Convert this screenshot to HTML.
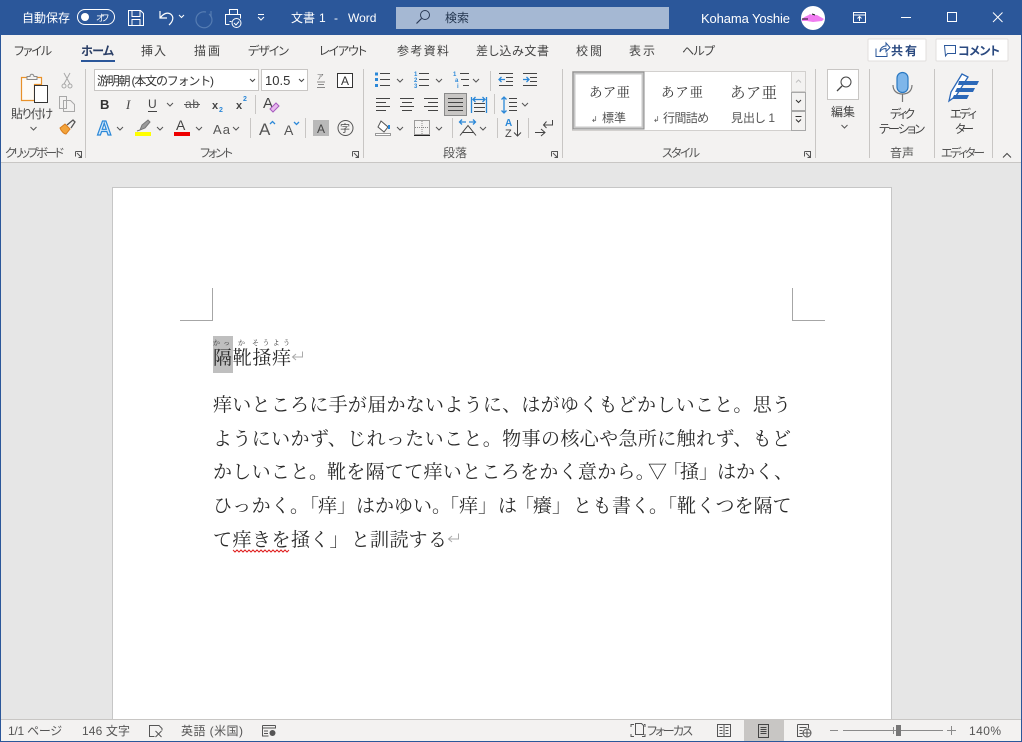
<!DOCTYPE html>
<html lang="ja"><head><meta charset="utf-8"><title>文書 1 - Word</title>
<style>
html,body{margin:0;padding:0;width:1022px;height:742px;overflow:hidden;background:#e6e6e6}
svg{display:block;position:absolute;left:0;top:0}
text{font-family:"Liberation Sans","Noto Sans CJK JP",sans-serif;font-size:12px;fill:#444;font-feature-settings:"palt"}
.w{fill:#fff}
.s{font-size:12px;fill:#555}
.d{font-family:"Liberation Serif","Noto Serif CJK JP","Noto Serif CJK SC",serif;font-size:19px;fill:#2a2a2a;font-feature-settings:normal}
.m{font-family:"Liberation Serif","Noto Serif CJK JP","Noto Serif CJK SC",serif;font-feature-settings:normal}
.l{stroke:#444;stroke-width:1;fill:none}
.g{stroke:#8a8a8a;stroke-width:1;fill:none}
.b{stroke:#2b88d8;stroke-width:1.3;fill:none}
.c{stroke:#555;stroke-width:1;fill:none}
.sep{stroke:#c8c6c4;stroke-width:1}
</style></head><body>
<svg width="1022" height="742" viewBox="0 0 1022 742" xmlns="http://www.w3.org/2000/svg">
<rect width="1022" height="742" fill="#e6e6e6"/>
<!-- title bar -->
<rect width="1022" height="35" fill="#2b579a"/>
<text class="w" x="22" y="22" textLength="48">自動保存</text>
<rect x="77.500" y="9.500" width="37" height="15" rx="7.500" fill="none" stroke="#fff"/>
<circle cx="85" cy="17" r="4" fill="#fff"/>
<text class="w" x="96" y="21" style="font-size:9px" textLength="13">オフ</text>
<path d="M128.500 10.500h12l3 3v12h-15zM132 10.500v6h8v-6M132 25.500v-6h8v6" fill="none" stroke="#fff"/>
<path d="M160 11v7h7M160.500 17.500c3-4 7-5.500 10-3.500 3.500 2.500 3 7-1.500 11" fill="none" stroke="#fff" stroke-width="1.200"/>
<path d="M179 15l2.500 2.500 2.500-2.500" fill="none" stroke="#fff"/>
<path d="M211 11v6M206 12a8 8 0 1 0 6 8 8 8 0 0 0-3-6" fill="none" stroke="#557cb2" stroke-width="1.200"/>
<path d="M229.500 14.500v-5h8v5M225.500 24.500v-10h15v4M225.500 24.500h4M229.500 21.500h2" fill="none" stroke="#fff"/>
<circle cx="236.500" cy="23" r="4.500" fill="#2b579a" stroke="#fff"/><path d="M234 23l2 2 3-3.500" fill="none" stroke="#fff"/>
<path d="M258 14.500h6M258 17l3 3 3-3" fill="none" stroke="#fff"/>
<text class="w" x="291" y="22" textLength="24">文書</text>
<text class="w" x="319" y="22">1</text>
<text class="w" x="334" y="22">-</text>
<text class="w" x="348" y="22">Word</text>
<rect x="396" y="7" width="273" height="22" fill="#a5b8d3"/>
<circle cx="425" cy="15" r="4.500" fill="none" stroke="#2b3a55"/><path d="M421.500 18.500l-5 5" stroke="#2b3a55" stroke-width="1.200"/>
<text x="445" y="22" textLength="24" style="fill:#24364f">検索</text>
<text class="w" x="701" y="23" textLength="89" style="font-size:13px">Kohama Yoshie</text>
<circle cx="813" cy="18" r="12" fill="#fff"/>
<path d="M802 19c3-3 6-3 8-5l2 1 5 0 7 4-2 2-9 1-6-1-5 0z" fill="#f07cf0"/><path d="M802 19h6M812 14l3 1" stroke="#111" stroke-width="1" fill="none"/>
<path d="M853.500 12.500h12v10h-12zM853.500 15h12M859.500 21v-4M857.500 18.500l2-2 2 2" fill="none" stroke="#fff"/>
<path d="M901 17.500h10" stroke="#fff"/>
<rect x="947.500" y="12.500" width="9" height="9" fill="none" stroke="#fff"/>
<path d="M993 12.500l9.500 9.500M1002.500 12.500l-9.500 9.500" stroke="#fff" stroke-width="1"/>
<!-- ribbon -->
<rect x="1" y="35" width="1020" height="127" fill="#f3f2f1"/>
<rect x="1" y="162" width="1020" height="1" fill="#c8c6c4"/>
<text x="14" y="55" textLength="38">ファイル</text>
<text x="81" y="55" textLength="33" style="font-weight:bold;fill:#2b3f66">ホーム</text>
<rect x="81" y="60" width="34" height="2" fill="#2b579a"/>
<text x="141" y="55" textLength="25">挿入</text>
<text x="194" y="55" textLength="26">描画</text>
<text x="248" y="55" textLength="41">デザイン</text>
<text x="319" y="55" textLength="48">レイアウト</text>
<text x="397" y="55" textLength="52">参考資料</text>
<text x="476" y="55" textLength="73">差し込み文書</text>
<text x="576" y="55" textLength="26">校閲</text>
<text x="629" y="55" textLength="26">表示</text>
<text x="682" y="55" textLength="33">ヘルプ</text>
<rect x="868" y="39" width="58" height="22" rx="1" fill="#fff" stroke="#e1dfdd"/>
<path d="M876 48.500v8h11v-4M880 52c0-4 3-6 6-6v-3l4 4.500-4 4v-3c-3 0-5 1-6 3.500z" fill="none" stroke="#2b579a"/>
<text x="891" y="55" textLength="26" style="font-weight:bold;fill:#2b4a80">共有</text>
<rect x="936" y="39" width="72" height="22" rx="1" fill="#fff" stroke="#e1dfdd"/>
<path d="M944.500 45.500h11v8h-8l-2 2.500z" fill="none" stroke="#2b579a"/>
<text x="958" y="55" textLength="42" style="font-weight:bold;fill:#2b4a80">コメント</text>
<!-- separators -->
<path class="sep" d="M85.500 69v89M363.500 69v89M562.500 69v89M815.500 69v89M869.500 69v89M934.500 69v89M992.500 69v89M255.500 95v19M250.500 118v20M305.500 118v20M490.500 71v20M494.500 94v20M452.500 118v20M497.500 118v20M528.500 118v20"/>
<!-- clipboard -->
<path d="M21.500 77.500h20v7h-7v16h-13z" fill="#fdfbf7" stroke="#e8912a" stroke-width="1.200"/>
<path d="M27 76.500h3c0-3 3.500-3 4 0h3v3h-10z" fill="#f3f2f1" stroke="#8a8a8a"/>
<rect x="34.500" y="85.500" width="13" height="17" fill="#fff" stroke="#333"/>
<text x="11" y="118" textLength="42">貼り付け</text>
<path class="c" d="M30.500 127l3 3 3-3"/>
<path d="M64 73l6 11M70 73l-6 11" stroke="#a8a8a8" fill="none"/><circle cx="64" cy="86" r="2" fill="none" stroke="#a8a8a8"/><circle cx="70" cy="86" r="2" fill="none" stroke="#a8a8a8"/>
<path d="M59.500 96.500h7v12h-7zM63.500 100.500h7l4 4v7h-11z" fill="#f3f2f1" stroke="#a8a8a8"/>
<path d="M60 128l5-4 5 5-4 5c-2 0-5-3-6-6z" fill="#f2a33a" stroke="#d97c1c"/><path d="M67 125l6-5 2 2-4 6" fill="none" stroke="#555" stroke-width="1.300"/>
<text class="s" x="5" y="157" textLength="59">クリップボード</text>
<path class="c" d="M75.500 151.500h6v6M75.500 151.500v5M77 153l4 4M81.500 154.500v3h-3" stroke="#666"/>
<!-- font -->
<rect x="94.500" y="69.500" width="164" height="21" fill="#fff" stroke="#c8c6c4"/>
<rect x="261.500" y="69.500" width="46" height="21" fill="#fff" stroke="#c8c6c4"/>
<text x="97" y="85" textLength="117" style="fill:#333;font-feature-settings:normal">游明朝 (本文のフォント)</text>
<text x="265" y="85" style="font-size:13px;fill:#333">10.5</text>
<path class="l" d="M250 79l2.500 2.500 2.500-2.500M299 79l2.500 2.500 2.500-2.500"/>
<text x="317" y="79" style="font-size:7px;fill:#666" textLength="8">ア</text>
<path d="M317 82h8M318 84.500h6M317 87.500h8" stroke="#888"/>
<rect x="337.500" y="73.500" width="15" height="14" fill="#fff" stroke="#333"/>
<text x="341" y="85" style="font-size:12px;fill:#333">A</text>
<text x="100" y="109" style="font-weight:bold;fill:#333;font-size:13px">B</text>
<text x="126" y="109" class="m" style="font-style:italic;fill:#444;font-size:13px">I</text>
<text x="148" y="108" style="fill:#444;font-size:12px">U</text><path d="M148 111.500h9" stroke="#444"/>
<path class="c" d="M167 103l3 3 3-3"/>
<text x="185" y="108" style="fill:#555;font-size:12px" textLength="14">ab</text><path d="M184 104.500h16" stroke="#555"/>
<text x="212" y="109" style="font-weight:bold;fill:#444;font-size:11px">x</text><text x="219" y="112" style="font-weight:bold;fill:#2b88d8;font-size:7px">2</text>
<text x="236" y="109" style="font-weight:bold;fill:#444;font-size:11px">x</text><text x="243" y="101" style="font-weight:bold;fill:#2b88d8;font-size:7px">2</text>
<text x="263" y="108" style="fill:#444;font-size:15px">A</text>
<path d="M270 109l6-6 3 3-6 6z" fill="#e8b8ee" stroke="#a65bbf"/>
<text x="97" y="135" style="font-size:20px;font-weight:bold;fill:#d5e9fa;stroke:#2b88d8;stroke-width:1.200">A</text>
<path class="c" d="M117 127l3 3 3-3M157 127l3 3 3-3M196 127l3 3 3-3M233 127l3 3 3-3"/>
<path d="M140 130l2-5 6-5 2 2-5 6zM137 131l3-1" fill="#9a9a9a" stroke="#777"/>
<rect x="135" y="132" width="16" height="4" fill="#ffff00"/>
<text x="176" y="130" style="font-size:14px;fill:#444">A</text>
<rect x="174" y="132" width="16" height="4" fill="#ee0000"/>
<text x="213" y="134" style="font-size:13px;fill:#555" textLength="17">Aa</text>
<text x="259" y="135" style="font-size:17px;fill:#555">A</text><path class="b" d="M270 124l2.500-2.500 2.500 2.500"/>
<text x="284" y="135" style="font-size:14px;fill:#555">A</text><path class="b" d="M294 122l2.500 2.500 2.500-2.500"/>
<rect x="313" y="120" width="16" height="16" fill="#b9b9b9"/>
<text x="317" y="133" style="font-size:12px;fill:#444">A</text>
<circle cx="345.500" cy="128" r="7.500" fill="none" stroke="#555"/>
<text x="340" y="132" style="font-size:10px;fill:#444">字</text>
<text class="s" x="200" y="157" textLength="33">フォント</text>
<path class="c" d="M352.500 151.500h6v6M352.500 151.500v5M354 153l4 4M358.500 154.500v3h-3" stroke="#666"/>
<!-- paragraph -->
<path fill="#2b88d8" d="M375 72.500h3v3h-3zM375 78h3v3h-3zM375 84h3v3h-3z"/>
<path class="l" d="M380 73.500h10M380 79.500h10M380 85.500h10M419 73.500h10M419 79.500h10M419 85.500h10M460 73.500h9M461 79.500h8M463 85.500h6"/>
<text x="414" y="76" style="font-size:6px;font-weight:bold;fill:#2b88d8">1</text><text x="414" y="82" style="font-size:6px;font-weight:bold;fill:#2b88d8">2</text><text x="414" y="88" style="font-size:6px;font-weight:bold;fill:#2b88d8">3</text>
<text x="453" y="76" style="font-size:6px;font-weight:bold;fill:#2b88d8">1</text><text x="455" y="82" style="font-size:6px;font-weight:bold;fill:#2b88d8">a</text><text x="457" y="88" style="font-size:6px;font-weight:bold;fill:#2b88d8">i</text>
<path class="c" d="M397 79l3 3 3-3M436 79l3 3 3-3M473 79l3 3 3-3M522 103l3 3 3-3M397 127l3 3 3-3M436 127l3 3 3-3M480 127l3 3 3-3"/>
<path class="l" d="M499 73.500h14M506 77.500h7M506 81.500h7M499 85.500h14M523 73.500h14M530 77.500h7M530 81.500h7M523 85.500h14"/>
<path class="b" d="M505 79.500h-6M501.500 77l-2.500 2.500 2.500 2.500M523 79.500h6M526.500 77l2.500 2.500-2.500 2.500"/>
<path class="l" d="M376 98.500h14M376 102.500h10M376 106.500h14M376 110.500h10M400 98.500h14M402 102.500h10M400 106.500h14M402 110.500h10M424 98.500h14M428 102.500h10M424 106.500h14M428 110.500h10"/>
<rect x="444.500" y="93.500" width="22" height="22" fill="#c8c6c4" stroke="#8a8a8a"/>
<path class="l" d="M448 98.500h15M448 102.500h15M448 106.500h15M448 110.500h15M474 103.500h11M474 107.500h11M474 111.500h11" stroke="#222"/>
<path class="b" d="M471.500 97v16M486.500 97v16M473 99.500h12M475.500 97l-2.500 2.500 2.500 2.500M482.500 97l2.500 2.500-2.500 2.500"/>
<path class="b" d="M504 97v16M501.500 99.500l2.500-2.500 2.500 2.500M501.500 110.500l2.500 2.500 2.500-2.500"/>
<path class="l" d="M509 98.500h8M509 102.500h8M509 106.500h8M509 110.500h8"/>
<path d="M381 121l7 6-4 5-6-5z" fill="#fff" stroke="#555"/><path d="M389 125v4" stroke="#2b88d8" stroke-width="2"/>
<rect x="375.500" y="133.500" width="15" height="2" fill="#fff" stroke="#999"/>
<rect x="414.500" y="120.500" width="15" height="14" fill="none" stroke="#444" stroke-dasharray="1 1"/><path d="M414 135.500h16" stroke="#222"/><path d="M422 121v14M415 127.500h14" stroke="#888" stroke-dasharray="1 1"/>
<path class="l" d="M460 135.500l8-10 8 10M462.500 132.500h11"/>
<path class="b" d="M460 122h6M462 119.500l-2.500 2.500 2.500 2.500M469 122h6M473 119.500l2.500 2.500-2.500 2.500"/>
<text x="505" y="126" style="font-size:10px;font-weight:bold;fill:#2b88d8">A</text><text x="505" y="137" style="font-size:11px;fill:#444">Z</text>
<path class="l" d="M517.500 120v16M514 132.500l3.500 3.500 3.500-3.500M535 132.500h10M541 129l4 3.500-4 3.500M552.500 120v5h-9M546.500 121.500l-3 3.500 3 3"/>
<text class="s" x="443" y="157" textLength="24">段落</text>
<path class="c" d="M551.500 151.500h6v6M551.500 151.500v5M553 153l4 4M557.500 154.500v3h-3" stroke="#666"/>
<!-- styles -->
<rect x="572.500" y="71.500" width="232" height="59" fill="#fff" stroke="#d2d0ce"/>
<rect x="574" y="73" width="69" height="55" fill="#fff" stroke="#c8c8c8" stroke-width="3"/>
<rect x="573" y="72" width="71" height="57" fill="none" stroke="#888"/>
<text class="m" x="589" y="97" textLength="41" style="font-size:13.500px;fill:#333">あア亜</text>
<text x="591" y="122" style="font-size:8px;fill:#555">↲</text><text x="602" y="122" textLength="24" style="fill:#555">標準</text>
<text class="m" x="661" y="97" textLength="42" style="font-size:13.500px;fill:#333">あア亜</text>
<text x="653" y="122" style="font-size:8px;fill:#555">↲</text><text x="663" y="122" textLength="46" style="fill:#555">行間詰め</text>
<text class="m" x="730" y="98" textLength="47" style="font-size:15.500px;fill:#444">あア亜</text>
<text x="731" y="122" textLength="44" style="fill:#555">見出し 1</text>
<rect x="791.500" y="71.500" width="14" height="20" fill="#f3f2f1" stroke="#d2d0ce"/>
<rect x="791.500" y="92.500" width="14" height="18" fill="#f3f2f1" stroke="#a8a8a8"/>
<rect x="791.500" y="111.500" width="14" height="19" fill="#f3f2f1" stroke="#a8a8a8"/>
<path d="M796 82.500l2.500-2.500 2.500 2.500" stroke="#c0c0c0" fill="none"/>
<path d="M796 100l2.500 2.500 2.500-2.500M795.500 116.500h6M796 119.500l2.500 2.500 2.500-2.500" stroke="#333" fill="none"/>
<text class="s" x="662" y="157" textLength="38">スタイル</text>
<path class="c" d="M804.500 151.500h6v6M804.500 151.500v5M806 153l4 4M810.500 154.500v3h-3" stroke="#666"/>
<!-- edit -->
<rect x="827.500" y="69.500" width="31" height="30" fill="#fff" stroke="#c8c6c4"/>
<circle cx="846" cy="82" r="5" fill="none" stroke="#444"/><path d="M842 86l-5 5" stroke="#444" stroke-width="1.300"/>
<text x="831" y="116" textLength="24">編集</text>
<path class="c" d="M841.500 125l3 3 3-3"/>
<!-- dictate -->
<rect x="897" y="72.500" width="11" height="20" rx="5.500" fill="#7eb6ea" stroke="#2b79c2" stroke-width="1.200"/>
<path d="M893 85c0 6 4 9 9.500 9s9.500-3 9.500-9M902.500 94v8" fill="none" stroke="#777" stroke-width="1.200"/>
<text x="890" y="118" textLength="25">ディク</text>
<text x="879" y="133" textLength="46">テーション</text>
<text class="s" x="890" y="157" textLength="24">音声</text>
<!-- editor -->
<path d="M949 101l2-9 11-18 6 3-12 19z" fill="#fff" stroke="#2b68b8" stroke-width="1.300"/>
<path d="M959 81h20l-2 4h-19zM957 88h18l-2 4h-18zM954 95h15l-2 4h-15z" fill="#2b68b8"/>
<text x="950" y="118" textLength="27">エディ</text>
<text x="955" y="133" textLength="19">ター</text>
<text class="s" x="941" y="157" textLength="44">エディター</text>
<path d="M1003 157.500l4-4 4 4" fill="none" stroke="#444"/>
<!-- page -->
<rect x="112.500" y="187.500" width="779" height="533" fill="#fff" stroke="#c6c6c6"/>
<path d="M212.500 288v32.500H180M792.500 288v32.500H825" fill="none" stroke="#a6a6a6"/>
<rect x="213" y="336" width="20" height="37" fill="#bfbfbf"/>
<text class="d" x="213" y="364" textLength="78">隔靴掻痒</text>
<text class="m" x="213" y="345" textLength="17" style="font-size:7px;fill:#333">かっ</text>
<text class="m" x="238" y="345" style="font-size:7px;fill:#333">か</text>
<text class="m" x="252" y="345" textLength="38" style="font-size:7px;fill:#333">そうよう</text>
<path d="M302.500 351.500v5.500h-10M296 354l-3.500 3 3.500 3" fill="none" stroke="#aaa"/>
<text class="d" x="213" y="411" textLength="578">痒いところに手が届かないように、はがゆくもどかしいこと。思う</text>
<text class="d" x="213" y="445" textLength="578">ようにいかず、じれったいこと。物事の核心や急所に触れず、もど</text>
<text class="d" y="478" x="213 232.300 251.600 270.900 290.200 309 327 346.300 365.600 384.900 404.200 423.500 442.800 462.100 481.400 500.700 520 539.300 558.600 577.900 597.200 616.500 635.800 648 663 680 699 717 736 755 774">かしいこと。靴を隔てて痒いところをかく意から。▽「掻」はかく、</text>
<text class="d" y="512" x="213 232.300 251.600 271 290 300 318 337 356 375 394 413 432 440 459 478 498 515 533 552 573 592.500 612 631 649 658 677 696.500 715.500 734.500 753.500 772.500">ひっかく。「痒」はかゆい。「痒」は「癢」とも書く。「靴くつを隔て</text>
<text class="d" y="546" x="213 232.500 252 271.500 291 310 329.500 351 370 389.500 408.500 428">て痒きを掻く」と訓読する</text>
<path d="M458.500 533.500v5.500h-10M452 536l-3.500 3 3.500 3" fill="none" stroke="#aaa"/>
<path d="M233 550l2 2 2-2 2 2 2-2 2 2 2-2 2 2 2-2 2 2 2-2 2 2 2-2 2 2 2-2 2 2 2-2 2 2 2-2 2 2 2-2 2 2 2-2 2 2 2-2 2 2 2-2 2 2 2-2" fill="none" stroke="#e02020"/>
<!-- status -->
<rect x="1" y="719" width="1020" height="22" fill="#f3f2f1"/>
<rect x="1" y="719" width="1020" height="1" fill="#c8c6c4"/>
<text x="8" y="735" textLength="54" style="fill:#555">1/1 ページ</text>
<text x="82" y="735" textLength="48" style="fill:#555">146 文字</text>
<path d="M155 725.500h-5.500v11h5M155 725.500h4l3 3v2M155.500 731l6 6M161.500 731l-6 6" fill="none" stroke="#555"/>
<text x="181" y="735" textLength="62" style="fill:#555">英語 (米国)</text>
<path d="M262.500 725.500h13M262.500 725.500v10.500h6M275.500 725.500v3M262.500 728h13M264 731h4M264 733.500h4" fill="none" stroke="#555"/><circle cx="272.500" cy="733" r="3" fill="#555"/>
<path d="M631 727v-2.500h3M631 734v2.500h3M645 727v-2.500h-1M645 734v2.500h-3M635.500 723.500h6l2 2v9h-8z" fill="none" stroke="#555"/>
<text x="647" y="735" textLength="46" style="fill:#555">フォーカス</text>
<path d="M717.500 724.500h13v12h-13zM724 724.500v12M719.500 727.500h3M719.500 730.500h3M719.500 733.500h3M725.500 727.500h3M725.500 730.500h3M725.500 733.500h3" fill="none" stroke="#555"/>
<rect x="744" y="720" width="40" height="21" fill="#c8c6c4"/>
<path d="M758.500 724.500h10v13h-10zM760.500 727.500h6M760.500 729.500h6M760.500 731.500h6M760.500 733.500h6" fill="none" stroke="#444"/>
<path d="M797.500 724.500h11v4M797.500 724.500v12h5M799.500 727.500h7M799.500 730.500h3M799.500 733.500h3" fill="none" stroke="#555"/>
<circle cx="807" cy="733" r="4" fill="none" stroke="#555"/><path d="M803 733h8M807 729v8" stroke="#555"/>
<path d="M830 730.500h8M843 730.500h100M947 730.500h9M951.500 726v9" stroke="#8a8a8a"/>
<path d="M893.500 727v7" stroke="#8a8a8a"/>
<rect x="896" y="725" width="5" height="11" fill="#777"/>
<text x="969" y="735" textLength="32" style="fill:#555">140%</text>
<!-- window edge -->
<rect x="0" y="35" width="1" height="707" fill="#2b579a"/>
<rect x="1021" y="35" width="1" height="707" fill="#2b579a"/>
<rect x="0" y="741" width="1022" height="1" fill="#2b579a"/>
</svg>
</body></html>
